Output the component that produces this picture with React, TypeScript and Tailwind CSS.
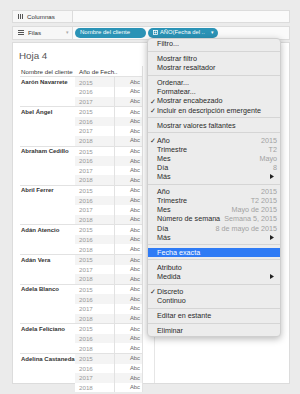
import React from 'react';

const groups: [string, number[]][] = [
  ['Aarón Navarrete', [2015, 2016, 2017]],
  ['Abel Ángel', [2015, 2016, 2017, 2018]],
  ['Abraham Cedillo', [2015, 2016, 2017, 2018]],
  ['Abril Ferrer', [2015, 2016, 2017, 2018]],
  ['Adán Atencio', [2015, 2016, 2018]],
  ['Adán Vera', [2015, 2017, 2018]],
  ['Adela Blanco', [2015, 2016, 2017, 2018]],
  ['Adela Feliciano', [2015, 2016, 2018]],
  ['Adelina Castaneda', [2015, 2016, 2017, 2018]],
];

type Item = {
  label: string;
  value?: string;
  check?: boolean;
  arrow?: boolean;
  active?: boolean;
};

const menu: Item[][] = [
  [{ label: 'Filtro...' }],
  [{ label: 'Mostrar filtro' }, { label: 'Mostrar resaltador' }],
  [
    { label: 'Ordenar...' },
    { label: 'Formatear...' },
    { label: 'Mostrar encabezado', check: true },
    { label: 'Incluir en descripción emergente', check: true },
  ],
  [{ label: 'Mostrar valores faltantes' }],
  [
    { label: 'Año', value: '2015', check: true },
    { label: 'Trimestre', value: 'T2' },
    { label: 'Mes', value: 'Mayo' },
    { label: 'Día', value: '8' },
    { label: 'Más', arrow: true },
  ],
  [
    { label: 'Año', value: '2015' },
    { label: 'Trimestre', value: 'T2 2015' },
    { label: 'Mes', value: 'Mayo de 2015' },
    { label: 'Número de semana', value: 'Semana 5, 2015' },
    { label: 'Día', value: '8 de mayo de 2015' },
    { label: 'Más', arrow: true },
  ],
  [{ label: 'Fecha exacta', active: true }],
  [{ label: 'Atributo' }, { label: 'Medida', arrow: true }],
  [{ label: 'Discreto', check: true }, { label: 'Continuo' }],
  [{ label: 'Editar en estante' }],
  [{ label: 'Eliminar' }],
];

const Arrow = () => (
  <svg width="4" height="5" viewBox="0 0 4 5" className="mr-[3px]">
    <path d="M0 0 L4 2.5 L0 5 Z" fill="#222" />
  </svg>
);

const MenuRow = ({ item }: { item: Item }) => (
  <div
    className={`relative flex h-[9.1px] items-center pl-[9px] pr-[3px] leading-none ${
      item.active ? 'bg-[#2f7bf5] text-white' : 'text-[#2a2a2a]'
    }`}
  >
    {item.check && <span className="absolute left-[1.5px] text-[7px]">✓</span>}
    <span className="flex-1 whitespace-nowrap">{item.label}</span>
    {item.value && <span className="whitespace-nowrap text-[#a2a2a2]">{item.value}</span>}
    {item.arrow && <Arrow />}
  </div>
);

const ContextMenu = () => (
  <div className="absolute left-[147px] top-[37.5px] w-[134px] rounded-[4px] border border-[#cfcfcf] bg-[#ececec] pb-[1px] pt-[0.5px] text-[7.2px] shadow-[0_2px_7px_rgba(0,0,0,0.28)] [font-family:'Liberation_Sans',Arial,sans-serif]">
    {menu.map((section, i) => (
      <div key={i}>
        {i > 0 && <div className="my-[2.5px] h-px bg-[#d5d5d5]" />}
        {section.map((item, j) => (
          <MenuRow key={j} item={item} />
        ))}
      </div>
    ))}
  </div>
);

const ColumnsIcon = () => (
  <svg width="5" height="5" viewBox="0 0 5 5">
    <rect x="0" y="0" width="1" height="5" fill="#555" />
    <rect x="2" y="0" width="1" height="5" fill="#555" />
    <rect x="4" y="0" width="1" height="5" fill="#555" />
  </svg>
);

const RowsIcon = () => (
  <svg width="6" height="5" viewBox="0 0 6 5">
    <rect x="0" y="0" width="6" height="1" fill="#555" />
    <rect x="0" y="2" width="6" height="1" fill="#555" />
    <rect x="0" y="4" width="6" height="1" fill="#555" />
  </svg>
);

const DateIcon = () => (
  <svg width="5" height="5" viewBox="0 0 5 5" className="mr-[2px]">
    <rect x="0.5" y="0.5" width="4" height="4" fill="none" stroke="#fff" strokeWidth="0.8" />
    <path d="M2.5 1.3 V3.7 M1.3 2.5 H3.7" stroke="#fff" strokeWidth="0.7" />
  </svg>
);

const Table = () => {
  let idx = 0;
  return (
    <div className="ml-[7px] w-[123px] border-r border-[#e2e2e2] text-[6.2px]">
      <div className="flex h-[10px] items-center text-[#333]">
        <div className="w-[55px] pl-[1px]">Nombre del cliente</div>
        <div className="pl-[4px]">Año de Fech..</div>
      </div>
      {groups.map(([name, years]) => (
        <div key={name} className="flex border-t border-[#e2e2e2]">
          <div className="w-[55px] pl-[1px] pt-[1.5px] text-[6px] font-bold leading-[6px] text-[#333]">
            {name}
          </div>
          <div className="flex-1">
            {years.map((y) => {
              const band = idx++ % 2 === 0;
              return (
                <div
                  key={y}
                  className={`flex h-[9.6px] items-center ${band ? 'bg-[#f4f4f4]' : 'bg-white'}`}
                >
                  <div className="w-[39px] pl-[4px] text-[#999]">{y}</div>
                  <div className="flex h-full flex-1 items-center justify-end border-l border-[#e2e2e2] pr-[2px] text-[5.8px] text-[#666]">
                    Abc
                  </div>
                </div>
              );
            })}
          </div>
        </div>
      ))}
    </div>
  );
};

export default function App() {
  return (
    <div className="relative h-[394px] w-[300px] overflow-hidden bg-[#ebebeb] [font-family:'Liberation_Sans',Arial,sans-serif]">
      <div className="flex flex-col gap-[2.7px] pl-[12px] pr-[10px] pt-[10px]">
        <div className="flex h-[13px]">
          <div className="flex w-[61px] items-center gap-[4px] border border-[#dcdcdc] bg-[#f7f7f7] pl-[5px] text-[6.2px] text-[#333]">
            <ColumnsIcon />
            Columnas
          </div>
          <div className="flex-1 border border-l-0 border-[#dcdcdc] bg-[#fafafa]" />
        </div>
        <div className="flex h-[14px]">
          <div className="flex w-[61px] items-center gap-[4px] border border-[#dcdcdc] bg-[#f7f7f7] pl-[5px] text-[6.2px] text-[#333]">
            <RowsIcon />
            <span className="flex-1">Filas</span>
            <span className="pr-[3px] text-[5px] text-[#aaa]">▾</span>
          </div>
          <div className="flex flex-1 items-center gap-[2px] border border-l-0 border-[#dcdcdc] bg-[#fafafa] pl-[2px]">
            <div className="flex h-[10px] w-[71px] items-center rounded-full bg-[#2b93b6] pl-[5px] text-[6px] text-white">
              Nombre del cliente
            </div>
            <div className="flex h-[10px] w-[70px] items-center rounded-full bg-[#2b93b6] pl-[5px] text-[5.8px] text-white">
              <DateIcon />
              <span className="flex-1">AÑO(Fecha del ..</span>
              <span className="pr-[4px] text-[5px]">▾</span>
            </div>
          </div>
        </div>
      </div>
      <div className="relative ml-[12px] mt-[2.7px] h-[342px] w-[278px] border border-[#dcdcdc] bg-white">
        <div className="absolute bottom-0 left-[141px] top-0 w-px bg-[#e6e6e6]" />
        <div className="pl-[6px] pt-[7px] text-[9.8px] leading-[12px] text-[#555]">Hoja 4</div>
        <div className="mt-[4px]">
          <Table />
        </div>
      </div>
      <ContextMenu />
    </div>
  );
}
